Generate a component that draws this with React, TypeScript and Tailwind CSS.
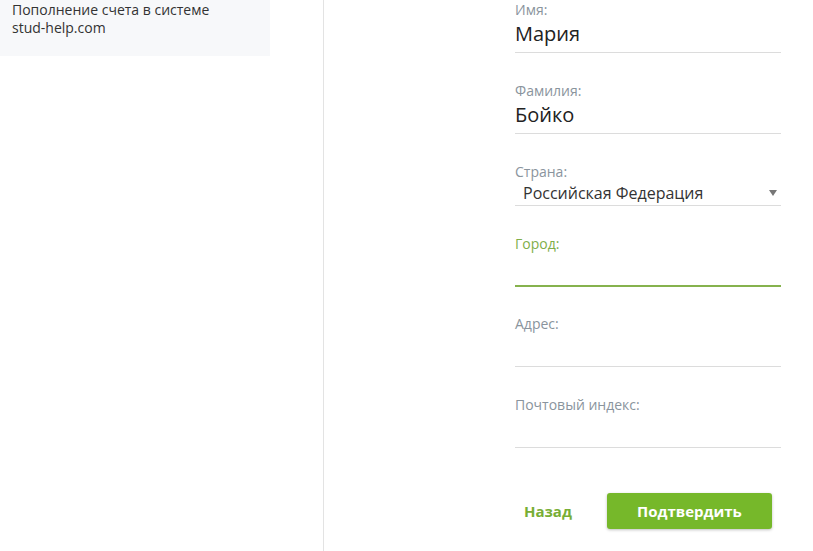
const fields = [
  { label: "Имя:", value: "Мария" },
  { label: "Фамилия:", value: "Бойко" },
];

const Field = ({
  label,
  value,
  active,
}: {
  label: string;
  value?: string;
  active?: boolean;
}) => (
  <div className={active ? "mb-[27px]" : "mb-[28px]"}>
    <label
      className={`block text-[14px] leading-[19px] ${active ? "text-[#7fae4a]" : "text-[#8a949d]"}`}
    >
      {label}
    </label>
    <div
      className={`h-[34px] flex items-center pb-1 text-[20px] text-[#222] ${active ? "border-b-2 border-[#86b24d]" : "border-b border-[#dcdcdc]"}`}
    >
      {value}
    </div>
  </div>
);

export default function App() {
  return (
    <div
      className="flex min-h-[551px] bg-white"
      style={{ fontFamily: "'Open Sans', sans-serif" }}
    >
      <aside className="w-[324px] shrink-0 border-r border-[#e3e3e3]">
        <div className="w-[270px] bg-[#f7f8fa] pl-3 pt-px pb-[19px] text-[14px] leading-[18px] text-[#333]">
          Пополнение счета в системе
          <br />
          stud-help.com
        </div>
      </aside>
      <main className="pl-[191px] pt-0">
        <form className="w-[266px]">
          {fields.map((f) => (
            <Field key={f.label} label={f.label} value={f.value} />
          ))}
          <div className="mb-[28px]">
            <label className="block text-[14px] leading-[19px] text-[#8a949d]">
              Страна:
            </label>
            <div className="h-[25px] flex items-center justify-between border-b border-[#dcdcdc] pl-2 pr-1 text-[16px] text-[#333]">
              <span>Российская Федерация</span>
              <svg width="8" height="6" viewBox="0 0 8 6">
                <path d="M0 0h8L4 6z" fill="#777" />
              </svg>
            </div>
          </div>
          <Field label="Город:" active />
          <Field label="Адрес:" />
          <Field label="Почтовый индекс:" />
          <div className="flex items-center pt-[17px]">
            <button
              type="button"
              className="ml-[9px] text-[15px] font-bold text-[#78ae35]"
            >
              Назад
            </button>
            <button
              type="button"
              className="ml-[35px] w-[165px] h-[36px] rounded-[3px] bg-[#76b82a] text-[15px] font-bold text-white shadow-[0_1px_3px_rgba(0,0,0,0.25)]"
            >
              Подтвердить
            </button>
          </div>
        </form>
      </main>
    </div>
  );
}
